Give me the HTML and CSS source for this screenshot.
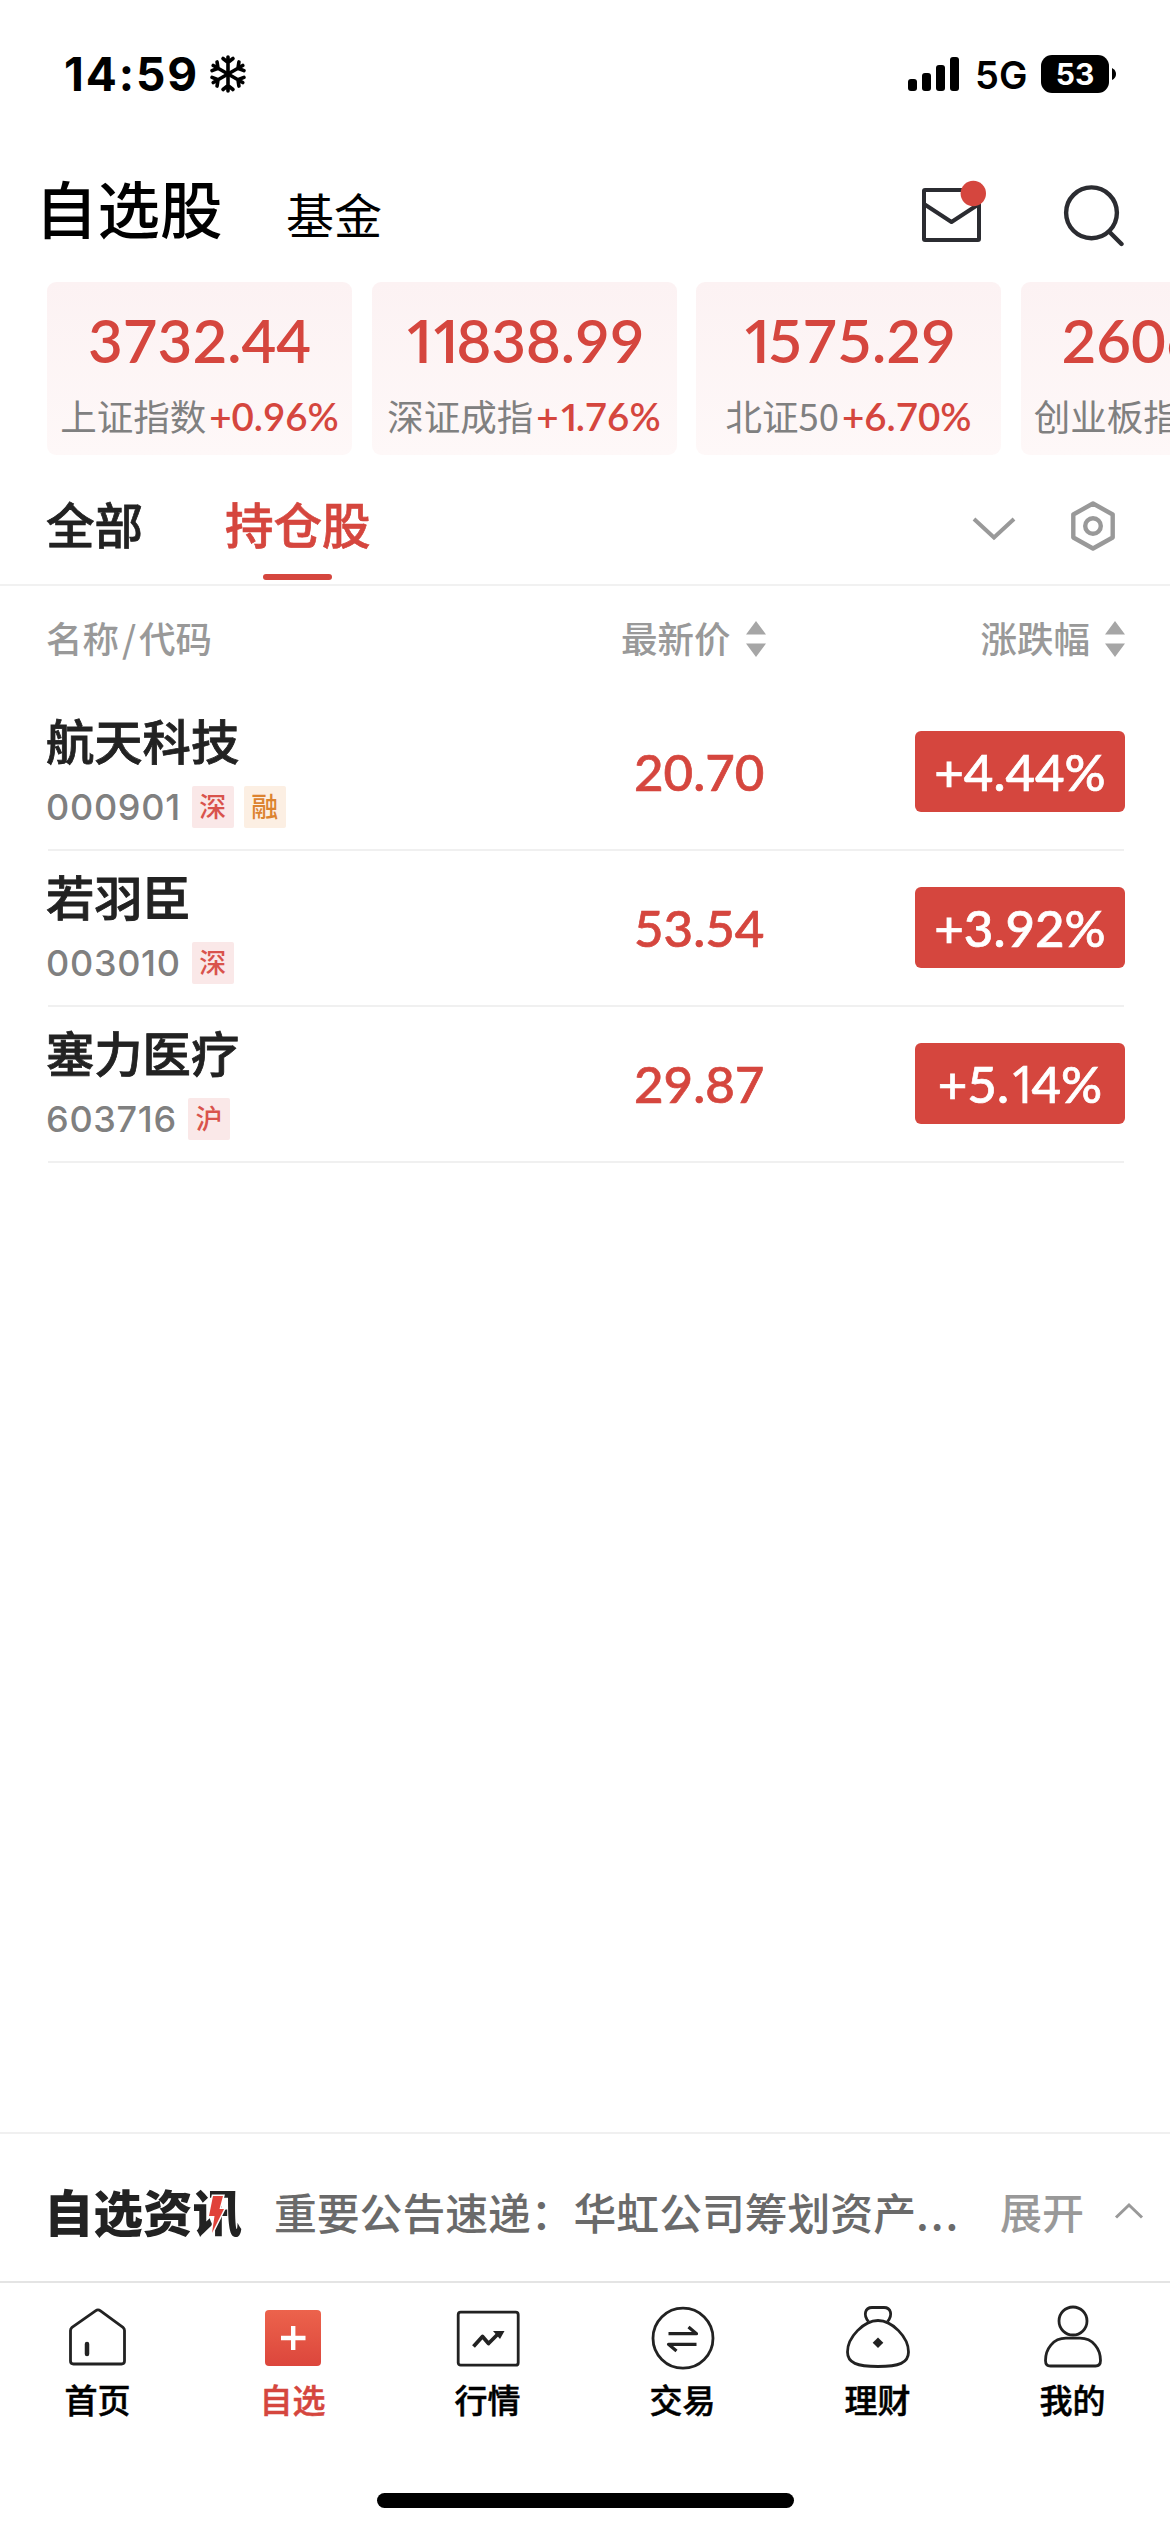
FILE: index.html
```html
<!DOCTYPE html>
<html lang="zh-CN">
<head>
<meta charset="utf-8">
<title>自选股</title>
<link rel="stylesheet" href="styles.css">
</head>
<body>
<div class="app">
  <div class="status">
    <div class="status-left">
      <span class="clock">14:59</span>
      <svg class="snow" width="36" height="40" viewBox="-18 -20 36 40" fill="none" stroke="#000" stroke-width="3.6" stroke-linecap="round">
        <g id="arm"><path d="M0 0V-17M-5 -15.500L0 -11.500L5 -15.500"/></g>
        <use href="#arm" transform="rotate(60)"/><use href="#arm" transform="rotate(120)"/><use href="#arm" transform="rotate(180)"/><use href="#arm" transform="rotate(240)"/><use href="#arm" transform="rotate(300)"/>
      </svg>
    </div>
    <div class="status-right">
      <svg width="52" height="35" viewBox="0 0 52 35"><rect x="0" y="22" width="9" height="12" rx="3"/><rect x="14" y="16" width="9" height="18" rx="3"/><rect x="28" y="8" width="9" height="26" rx="3"/><rect x="42" y="0" width="9" height="34" rx="3"/></svg>
      <span class="net">5G</span>
      <span class="battery">53</span>
      <svg class="nub" width="4" height="12" viewBox="0 0 4 12"><path d="M0 0Q4 2 4 6T0 12Z"/></svg>
    </div>
  </div>

  <header class="top">
    <h1 class="top-title">自选股</h1>
    <span class="top-sub">基金</span>
    <svg class="mail" width="66" height="64" viewBox="0 0 66 64" fill="none" stroke="#2b2c31" stroke-width="4" stroke-linejoin="round">
      <rect x="3" y="10" width="55" height="50" rx="1"/><path d="M3 24L30.500 42L58 24"/><circle cx="52.300" cy="13.500" r="12.700" fill="#d5463e" stroke="none"/>
    </svg>
    <svg class="search" width="64" height="64" viewBox="0 0 64 64" fill="none" stroke="#2b2c31" stroke-width="4.400" stroke-linecap="round"><circle cx="29.500" cy="29.800" r="25.400"/><path d="M47 48.500L59.500 61"/></svg>
  </header>

  <section class="indices">
    <div class="card"><div class="card-num">3732.44</div><div class="card-sub">上证指数<b>+0.96%</b></div></div>
    <div class="card"><div class="card-num"><i>11</i>838.99</div><div class="card-sub">深证成指<b>+<i>1</i>.76%</b></div></div>
    <div class="card"><div class="card-num"><i>1</i>575.29</div><div class="card-sub">北证<em>50</em><b>+6.70%</b></div></div>
    <div class="card"><div class="card-num">2606.20</div><div class="card-sub">创业板指<b>+0.84%</b></div></div>
  </section>

  <nav class="tabs">
    <span class="tab">全部</span>
    <span class="tab tab-on">持仓股</span>
    <svg class="down" width="46" height="28" viewBox="0 0 46 28" fill="none" stroke="#999" stroke-width="4"><path d="M3 4L23 22.500L43 4"/></svg>
    <svg class="hex" width="48" height="52" viewBox="0 0 48 52" fill="none" stroke="#999" stroke-width="4.400" stroke-linejoin="round"><path d="M24 3.500L43.700 14.500V37.500L24 48.500L4.300 37.500V14.500Z"/><circle cx="24" cy="26" r="7.800"/></svg>
  </nav>

  <div class="thead">
    <span class="th th-name">名称<i>/</i>代码</span>
    <span class="th th-price">最新价<svg class="sort" width="20" height="36" viewBox="0 0 20 36"><path d="M10 0L20 13.500H0ZM10 36L20 22.500H0Z"/></svg></span>
    <span class="th th-pct">涨跌幅<svg class="sort" width="20" height="36" viewBox="0 0 20 36"><path d="M10 0L20 13.500H0ZM10 36L20 22.500H0Z"/></svg></span>
  </div>

  <main class="list">
    <div class="row">
      <div class="stock"><div class="name">航天科技</div><div class="meta"><span class="code">000901</span><span class="tag">深</span><span class="tag tag-rong">融</span></div></div>
      <div class="price">20.70</div><div class="pct">+4.44%</div>
    </div>
    <div class="row">
      <div class="stock"><div class="name">若羽臣</div><div class="meta"><span class="code">003010</span><span class="tag">深</span></div></div>
      <div class="price">53.54</div><div class="pct">+3.92%</div>
    </div>
    <div class="row">
      <div class="stock"><div class="name">塞力医疗</div><div class="meta"><span class="code">603716</span><span class="tag">沪</span></div></div>
      <div class="price">29.87</div><div class="pct">+5.<i>1</i>4%</div>
    </div>
  </main>

  <section class="news">
    <div class="news-logo">自选资讯<svg class="bolt" width="22" height="42" viewBox="0 0 22 42"><path d="M8 3H18L14.500 16H19L7 40L9.500 23H4Z" fill="#e0423a" stroke="#fff" stroke-width="3" paint-order="stroke"/></svg></div>
    <div class="news-text">重要公告速递：华虹公司筹划资产<span class="dots">...</span></div>
    <span class="expand">展开</span>
    <svg class="up" width="30" height="18" viewBox="0 0 30 18" fill="none" stroke="#999" stroke-width="3"><path d="M2 15.500L15 3L28 15.500"/></svg>
  </section>

  <footer class="bar">
    <a class="item"><svg class="ic" viewBox="0 0 66 66"><path d="M5.500 25.500Q5.500 23.500 7 22.300L30.500 5.800Q33 4 35.500 5.800L58 22.300Q59.500 23.500 59.500 25.500V56Q59.500 59 56.500 59H8.500Q5.500 59 5.500 56Z"/><path d="M22 39V49" stroke-width="4.500" stroke-linecap="round"/></svg><span>首页</span></a>
    <a class="item item-on"><svg class="ic" viewBox="0 0 66 66"><defs><linearGradient id="g" x1="0" y1="0" x2="0" y2="1"><stop offset="0" stop-color="#ec634c"/><stop offset="1" stop-color="#dc463c"/></linearGradient></defs><rect x="5" y="5" width="56" height="56" rx="4" fill="url(#g)" stroke="none"/><path d="M21 33H45.500M33.200 21V45" stroke="#fff" stroke-width="4.400"/></svg><span>自选</span></a>
    <a class="item"><svg class="ic" viewBox="0 0 66 66"><rect x="3.200" y="7.200" width="60" height="53" rx="2.500"/><path d="M18.500 41.500L27.500 31.500L33.500 38.500L44 28" stroke-width="3.800"/><path d="M38 26H49.500L45 34Z" fill="#222" stroke="none"/></svg><span>行情</span></a>
    <a class="item"><svg class="ic" viewBox="0 0 66 66"><circle cx="33" cy="33.200" r="30"/><path d="M18.500 28.700H46.500L38.500 22M46.500 39.300H18.500L26.500 46" stroke-width="3.200"/></svg><span>交易</span></a>
    <a class="item"><svg class="ic" viewBox="0 0 66 66"><path d="M23.500 16.500C18 10 20 2.500 27 2.500H39C46 2.500 48 10 42.500 16.500"/><path d="M33 15.500C47 15.500 63.500 32 63.500 47C63.500 58 54 61.500 33 61.500S2.500 58 2.500 47C2.500 32 19 15.500 33 15.500Z"/><path d="M33 32.500L38.300 37.800L33 43.100L27.700 37.800Z" fill="#222" stroke="none"/></svg><span>理财</span></a>
    <a class="item"><svg class="ic" viewBox="0 0 66 66"><circle cx="33" cy="16" r="14"/><path d="M26 33.200H40C53 33.200 60.500 44 60.500 55.500Q60.500 61 55.500 61H10.500Q5.500 61 5.500 55.500C5.500 44 13 33.200 26 33.200Z"/></svg><span>我的</span></a>
  </footer>
  <div class="home"></div>
</div>
</body>
</html>
```
FILE: styles.css
```css
* { box-sizing: border-box; }
body { margin: 0; background: #fff; font-family: "Noto Sans CJK SC", sans-serif; color: #222; }
i, em { font-style: normal; }
svg { display: block; flex: none; }
.app { width: 1170px; height: 2532px; overflow: hidden; display: flex; flex-direction: column; background: #fff; }

.status { height: 150px; flex: none; display: flex; justify-content: space-between; padding: 0 54px 2px 64px; align-items: center; color: #000; }
.status-left, .status-right { display: flex; align-items: center; }
.clock { font: 700 46px/60px Inter, sans-serif; letter-spacing: 1.9px; width: 146px; }
.net { font: 600 38px/50px Inter, sans-serif; margin-left: 15px; width: 66px; padding-top: 2px; }
.battery { width: 68px; height: 38px; border-radius: 11px; background: #000; color: #fff; font: 700 30px/38px Inter, sans-serif; text-align: center; }
.nub { margin-left: 3px; }

.top { height: 132px; flex: none; display: flex; align-items: flex-start; padding: 30px 45px 0 35px; color: #000; }
.top-title { margin: -6px 0 0; font-size: 62.500px; font-weight: 500; line-height: 66px; width: 251px; }
.top-sub { font-size: 48px; line-height: 66px; margin-top: 0; }
.mail { margin: 0 75px 0 auto; }
.search { margin-top: 3px; margin-right: -1px; }

.indices { height: 173px; flex: none; display: flex; gap: 19.500px; padding-left: 47px; overflow: hidden; }
.card { width: 305px; flex: none; height: 173px; border-radius: 9px; background: linear-gradient(#fcf2f3, #fef8f8); text-align: center; white-space: nowrap; }
.card-num { font: 600 60px/66px Lato, sans-serif; color: #d5463e; padding-top: 25px; height: 109px; }
.card-num i, .card-sub i, .pct i { font-family: "Open Sans", sans-serif; letter-spacing: -0.13em; line-height: 1; }
.card-sub { font-size: 36.500px; line-height: 50px; color: #808080; }
.card-sub b { font: 600 38.500px/50px Lato, sans-serif; color: #d5463e; margin-left: 3px; }

.tabs { height: 131px; flex: none; display: flex; align-items: flex-start; padding: 36px 56px 0 46px; border-bottom: 2px solid #f1f1f1; }
.tab { font-size: 48.500px; font-weight: 500; -webkit-text-stroke: 0.7px; line-height: 64px; margin-right: 82px; }
.tab-on { color: #d5463e; position: relative; }
.tab-on::after { content: ""; position: absolute; left: 38px; top: 83px; width: 69px; height: 6px; border-radius: 3px; background: #d5463e; }
.down { margin: 24px 52px 0 auto; }
.hex { margin-top: 9px; margin-right: -3px; }

.thead { height: 109px; flex: none; display: flex; padding: 27px 45px 0 46px; color: #999; font-size: 36.500px; font-weight: 500; line-height: 50px; }
.th { display: flex; }
.th-name i { width: 20px; text-align: center; }
.th-name { width: 576px; }
.th-price { width: 360px; }
.th-pct { white-space: nowrap; }
.sort { fill: #a6a6a6; margin: 8px 0 0 15px; }

.list { height: 1437px; flex: none; padding: 0 45px 0 48px; }
.row { height: 156px; display: flex; position: relative; }
.row::after { content: ""; position: absolute; left: 0; right: 1px; bottom: 0; height: 2px; background: #f0f0f0; }
.stock { width: 588px; flex: none; margin-left: -2px; }
.name { font-size: 48.300px; font-weight: 500; -webkit-text-stroke: 0.8px; line-height: 60px; margin-top: 14px; }
.meta { display: flex; align-items: center; height: 42px; margin-top: 17px; gap: 10px; }
.code { font: 500 36px/42px Inter, sans-serif; letter-spacing: 0.700px; color: #808080; margin-right: 1px; }
.tag { width: 42px; height: 42px; border-radius: 2px; background: #fae8e8; color: #d9534c; font-size: 27px; font-weight: 500; line-height: 40px; text-align: center; }
.tag-rong { background: #fcefe3; color: #dc8330; }
.price { font: 500 51px/60px Lato, sans-serif; -webkit-text-stroke: 0.7px; color: #d5463e; width: 281px; margin-top: 47px; }
.pct { width: 210px; height: 81px; margin-top: 36px; border-radius: 6px; background: #d5463e; color: #fff; font: 500 51px/81px Lato, sans-serif; -webkit-text-stroke: 0.7px; text-align: center; }

.news { height: 150px; flex: none; display: flex; align-items: center; padding: 5px 26px 0 44px; border-top: 2px solid #f0f0f0; white-space: nowrap; }
.news-logo { font-size: 49.500px; font-weight: 900; line-height: 64px; width: 230px; position: relative; }
.bolt { position: absolute; left: 161px; top: 14px; }
.news-text { font-size: 42.800px; font-weight: 500; color: #6a6a6a; line-height: 64px; width: 726px; }
.dots { letter-spacing: 2px; }
.expand { font-size: 42px; font-weight: 500; color: #999; }
.up { margin-left: auto; }

.bar { height: 176px; flex: none; border-top: 2px solid #e4e4e4; display: flex; margin-top: -1px; padding-top: 22px; }
.item { flex: 1; display: flex; flex-direction: column; align-items: center; color: #000; font-size: 33px; font-weight: 500; -webkit-text-stroke: 0.5px; line-height: 48px; }
.item span { margin-top: 4px; }
.item-on { color: #d5463e; }
.ic { width: 66px; height: 66px; fill: none; stroke: #222; stroke-width: 2.800; stroke-linejoin: round; }
.home { width: 417px; height: 15px; border-radius: 8px; background: #000; margin: 36px auto 0; flex: none; }
```
